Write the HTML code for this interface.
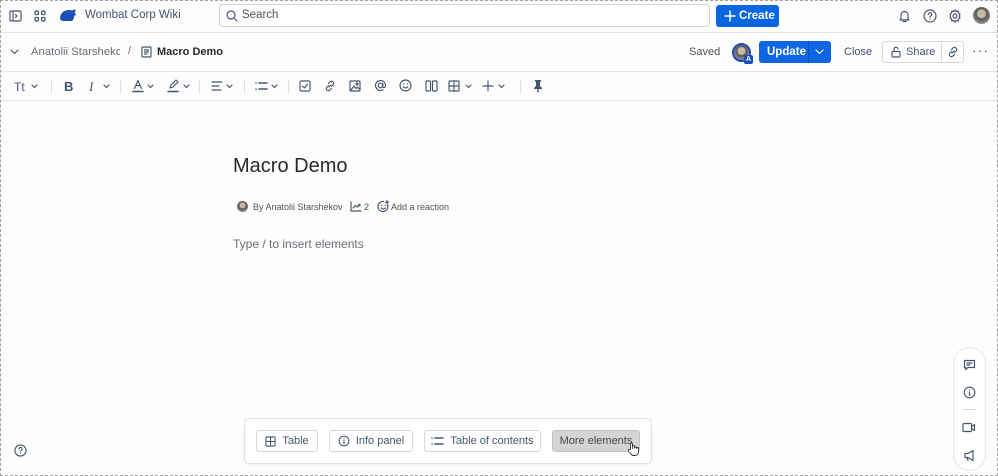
<!DOCTYPE html>
<html><head><meta charset="utf-8"><style>
*{box-sizing:border-box;margin:0;padding:0}
body{width:998px;height:476px;overflow:hidden;background:#fdfdfd;font-family:"Liberation Sans",sans-serif;color:#292a2e;position:relative}
.frame{position:absolute;inset:0;border:1px dashed #a0a0a0;pointer-events:none;z-index:10}
.a{position:absolute}
.hl{position:absolute;left:0;right:0;height:1px;background:#e3e4e6}
svg{fill:none;stroke:#44546f;stroke-width:1.15;stroke-linecap:round;stroke-linejoin:round}
svg.a{position:absolute}
.t{position:absolute;font-size:11px;white-space:nowrap}
.btn{position:absolute;border:1px solid #d5d7db;border-radius:3px;background:#fff;font-size:11px;color:#44546f;display:flex;align-items:center;justify-content:center;gap:6px;white-space:nowrap}
.sep{position:absolute;top:79px;width:1px;height:15px;background:#dcdfe4}
</style></head><body>
<div class="frame"></div>
<!-- top bar -->
<svg class="a" style="left:9px;top:10px" width="13" height="12" viewBox="0 0 13 12"><rect x="1" y="1" width="11" height="10" rx="1"/><path d="M4 1v10M6.5 4.5l1.5 1.5-1.5 1.5"/></svg>
<svg class="a" style="left:34px;top:10px" width="12" height="12" viewBox="0 0 12 12"><rect x="1" y="1" width="3.5" height="3.5" rx=".8"/><rect x="7.5" y="1" width="3.5" height="3.5" rx=".8"/><rect x="1" y="7.5" width="3.5" height="3.5" rx=".8"/><rect x="7.5" y="7.5" width="3.5" height="3.5" rx=".8"/></svg>
<svg class="a" style="left:59px;top:8px;stroke:none" width="18" height="14" viewBox="0 0 18 14"><path fill="#1d4fb8" d="M1 11C1 5 5 2 10 2c3 0 5 1 6 3l1 2-2 1c0 3-1 5-3 5H3z"/><circle cx="15" cy="3" r="1.5" fill="#1d4fb8"/></svg>
<div class="t" style="left:85px;top:9px;font-size:11.5px;color:#44546f">Wombat Corp Wiki</div>
<div class="a" style="left:219px;top:4px;width:491px;height:23px;border:1px solid #d0d3d8;border-radius:4px;background:#fff"></div>
<svg class="a" style="left:226px;top:10px" width="12" height="12" viewBox="0 0 12 12"><circle cx="5" cy="5" r="4"/><path d="M8 8l3 3"/></svg>
<div class="t" style="left:242px;top:9px;font-size:11.5px;color:#505258">Search</div>
<div class="a" style="left:716px;top:5px;width:63px;height:22px;background:#0c66e4;border-radius:3px;color:#fff;font-size:11.5px;font-weight:bold;line-height:22px;padding-left:23px">Create</div>
<svg class="a" style="left:724px;top:10px;stroke:#fff;stroke-width:1.5" width="12" height="12" viewBox="0 0 12 12"><path d="M6 1v10M1 6h10"/></svg>
<svg class="a" style="left:898px;top:9px" width="13" height="14" viewBox="0 0 13 14"><path d="M3 10V6a3.5 3.5 0 017 0v4l1 1H2zM5 12.5h3"/></svg>
<svg class="a" style="left:923px;top:9px" width="14" height="14" viewBox="0 0 14 14"><circle cx="7" cy="7" r="6"/><path d="M5.3 5.5a1.7 1.7 0 113 1c-.8.5-1.3.8-1.3 1.7M7 10v.1"/></svg>
<svg class="a" style="left:948px;top:9px" width="14" height="14" viewBox="0 0 14 14"><circle cx="7" cy="7" r="2"/><path d="M7 1l1.2 1.5 1.9-.4.4 1.9L12 5.2 11.3 7l.7 1.8-1.5 1.2-.4 1.9-1.9-.4L7 13l-1.2-1.5-1.9.4-.4-1.9L2 8.8 2.7 7 2 5.2 3.5 4l.4-1.9 1.9.4z"/></svg>
<div class="a" style="left:973px;top:7px;width:17px;height:17px;border-radius:50%;background:radial-gradient(circle at 50% 40%,#c9b8a8 30%,#555 38%,#aaa 90%)"></div>
<div class="hl" style="top:32px"></div>
<!-- second bar -->
<svg class="a" style="left:10px;top:49px" width="9" height="6" viewBox="0 0 9 6"><path d="M1 1l3.5 3.5L8 1"/></svg>
<div class="t" style="left:31px;top:46px;color:#6b6e76;font-size:11.3px;width:89px;overflow:hidden">Anatolii Starshekov</div>
<div class="t" style="left:128px;top:45px;color:#6b6e76">/</div>
<svg class="a" style="left:141px;top:46px" width="11" height="12" viewBox="0 0 11 12"><rect x="1" y="1" width="9" height="10" rx="1"/><path d="M3.5 4h4M3.5 6h4M3.5 8h2.5"/></svg>
<div class="t" style="left:157px;top:46px;font-weight:bold;color:#292a2e">Macro Demo</div>
<div class="t" style="left:689px;top:46px;color:#505258">Saved</div>
<div class="a" style="left:732px;top:43px;width:19px;height:19px;border-radius:50%;border:2px solid #1d4fb8;background:radial-gradient(circle at 50% 40%,#c9b8a8 30%,#555 38%,#aaa 90%)"></div>
<div class="a" style="left:744px;top:55px;width:9px;height:9px;background:#1d4fb8;color:#fff;font-size:7px;font-weight:bold;text-align:center;line-height:9px;border-radius:2px">A</div>
<div class="a" style="left:759px;top:41px;width:72px;height:22px;background:#0c66e4;border-radius:3px"></div>
<div class="t" style="left:767px;top:46px;color:#fff;font-weight:bold;font-size:11.5px">Update</div>
<div class="a" style="left:808px;top:41px;width:1px;height:22px;background:#0a4fb0"></div>
<svg class="a" style="left:815px;top:49px;stroke:#fff" width="9" height="6" viewBox="0 0 9 6"><path d="M1 1l3.5 3.5L8 1"/></svg>
<div class="t" style="left:844px;top:46px;color:#44546f">Close</div>
<div class="a" style="left:882px;top:41px;width:82px;height:22px;border:1px solid #d5d7db;border-radius:3px;background:#fff"></div>
<div class="a" style="left:941px;top:41px;width:1px;height:22px;background:#d5d7db"></div>
<svg class="a" style="left:891px;top:46px" width="10" height="12" viewBox="0 0 10 12"><rect x="1" y="5.5" width="8" height="5.5" rx="1"/><path d="M3 5.5V3.5a2 2 0 014-.5"/></svg>
<div class="t" style="left:906px;top:46px;color:#44546f">Share</div>
<svg class="a" style="left:947px;top:46px" width="12" height="12" viewBox="0 0 12 12"><path d="M5 7l2-2M4.5 5.5L3 7a2 2 0 003 3l1.5-1.5M7.5 6.5L9 5a2 2 0 00-3-3L4.5 3.5"/></svg>
<div class="t" style="left:972px;top:42px;font-size:14px;color:#44546f;letter-spacing:1px">···</div>
<div class="hl" style="top:71px"></div>
<!-- toolbar -->
<div class="t" style="left:14px;top:80px;font-size:12px;color:#44546f">Tt</div>
<svg class="a" style="left:31px;top:84px" width="7" height="5" viewBox="0 0 7 5"><path d="M1 1l2.5 2.5L6 1"/></svg>
<div class="sep" style="left:51px"></div>
<div class="t" style="left:64px;top:79px;font-size:13px;font-weight:bold;color:#44546f">B</div>
<div class="t" style="left:89px;top:79px;font-size:13px;font-style:italic;font-family:'Liberation Serif',serif;color:#44546f">I</div>
<svg class="a" style="left:103px;top:84px" width="7" height="5" viewBox="0 0 7 5"><path d="M1 1l2.5 2.5L6 1"/></svg>
<div class="sep" style="left:120px"></div>
<svg class="a" style="left:132px;top:79px" width="12" height="14" viewBox="0 0 12 14"><path d="M2.5 9.5L6 1.5l3.5 8M4 6.5h4"/><path d="M1 12.5h10" stroke-width="1.6"/></svg>
<svg class="a" style="left:147px;top:84px" width="7" height="5" viewBox="0 0 7 5"><path d="M1 1l2.5 2.5L6 1"/></svg>
<svg class="a" style="left:167px;top:79px" width="12" height="14" viewBox="0 0 12 14"><path d="M3 9l1-3 5-5 2 2-5 5z"/><path d="M1 12.5h10" stroke-width="1.6"/></svg>
<svg class="a" style="left:183px;top:84px" width="7" height="5" viewBox="0 0 7 5"><path d="M1 1l2.5 2.5L6 1"/></svg>
<div class="sep" style="left:199px"></div>
<svg class="a" style="left:211px;top:81px" width="12" height="10" viewBox="0 0 12 10"><path d="M1 1h10M1 5h7M1 9h9"/></svg>
<svg class="a" style="left:226px;top:84px" width="7" height="5" viewBox="0 0 7 5"><path d="M1 1l2.5 2.5L6 1"/></svg>
<div class="sep" style="left:244px"></div>
<svg class="a" style="left:255px;top:81px" width="13" height="10" viewBox="0 0 13 10"><path d="M1 2h.1M1 8h.1M4 2h8M4 8h8" stroke-width="1.5"/></svg>
<svg class="a" style="left:271px;top:84px" width="7" height="5" viewBox="0 0 7 5"><path d="M1 1l2.5 2.5L6 1"/></svg>
<div class="sep" style="left:288px"></div>
<svg class="a" style="left:299px;top:80px" width="12" height="12" viewBox="0 0 12 12"><rect x="1" y="1" width="10" height="10" rx="1.5"/><path d="M3.5 6l2 2 3-4"/></svg>
<svg class="a" style="left:324px;top:80px" width="12" height="12" viewBox="0 0 12 12"><path d="M5 7l2-2M4.5 5.5L3 7a2 2 0 003 3l1.5-1.5M7.5 6.5L9 5a2 2 0 00-3-3L4.5 3.5"/></svg>
<svg class="a" style="left:349px;top:80px" width="12" height="12" viewBox="0 0 12 12"><rect x="1" y="1" width="10" height="10" rx="1"/><path d="M2 10l3-4 2 2.5 1.5-1.5L10 9"/><circle cx="8" cy="4" r="1"/></svg>
<svg class="a" style="left:374px;top:79px" width="13" height="13" viewBox="0 0 13 13"><circle cx="6.5" cy="6.5" r="2.3"/><path d="M8.8 4.5v3c0 1.5 2.7 1.5 2.7-1A5 5 0 109 10.8"/></svg>
<svg class="a" style="left:399px;top:79px" width="13" height="13" viewBox="0 0 13 13"><circle cx="6.5" cy="6.5" r="5.5"/><path d="M4.3 7.8a2.8 2.8 0 004.4 0M4.6 5h.1M8.4 5h.1"/></svg>
<svg class="a" style="left:425px;top:80px" width="13" height="12" viewBox="0 0 13 12"><rect x="1" y="1" width="4.5" height="10" rx="1"/><rect x="7.5" y="1" width="4.5" height="10" rx="1"/></svg>
<svg class="a" style="left:448px;top:80px" width="12" height="12" viewBox="0 0 12 12"><rect x="1" y="1" width="10" height="10" rx="1"/><path d="M6 1v10M1 6h10"/></svg>
<svg class="a" style="left:465px;top:84px" width="7" height="5" viewBox="0 0 7 5"><path d="M1 1l2.5 2.5L6 1"/></svg>
<svg class="a" style="left:482px;top:80px" width="12" height="12" viewBox="0 0 12 12"><path d="M6 1v10M1 6h10"/></svg>
<svg class="a" style="left:498px;top:84px" width="7" height="5" viewBox="0 0 7 5"><path d="M1 1l2.5 2.5L6 1"/></svg>
<div class="sep" style="left:520px"></div>
<svg class="a" style="left:532px;top:79px;stroke:none" width="12" height="14" viewBox="0 0 12 14"><path fill="#44546f" d="M3 1h6v1.5L8 3v4l2 2v1H6.7v3.5h-1.4V10H2V9l2-2V3L3 2.5z"/></svg>
<div class="hl" style="top:100px"></div>
<!-- content -->
<div class="t" style="left:233px;top:155px;font-size:20px;color:#292a2e">Macro Demo</div>
<div class="a" style="left:237px;top:201px;width:11px;height:11px;border-radius:50%;background:radial-gradient(circle at 50% 40%,#c9b8a8 30%,#555 40%,#aaa 90%)"></div>
<div class="t" style="left:253px;top:202px;font-size:9px;color:#505258">By Anatolii Starshekov</div>
<svg class="a" style="left:350px;top:201px" width="12" height="11" viewBox="0 0 12 11"><path d="M1 1v9h10M3 7l2.5-2.5 2 1.5L10 3.5M8.5 3.5H10V5"/></svg>
<div class="t" style="left:364px;top:202px;font-size:9px;color:#505258">2</div>
<svg class="a" style="left:377px;top:200px" width="13" height="13" viewBox="0 0 13 13"><path d="M10.5 4.5A5 5 0 116.5 1.5"/><path d="M4.3 8a2.5 2.5 0 004 0M4.6 5.5h.1M8 5.5h.1M10 .5v3.5M8.3 2.2h3.5"/></svg>
<div class="t" style="left:391px;top:202px;font-size:9px;color:#505258">Add a reaction</div>
<div class="t" style="left:233px;top:237px;font-size:12px;color:#6b6e76">Type / to insert elements</div>
<!-- side panel -->
<div class="a" style="left:953px;top:347px;width:33px;height:124px;border:1px solid #e6e7ea;border-radius:17px;background:#fff"></div>
<svg class="a" style="left:963px;top:359px" width="13" height="12" viewBox="0 0 13 12"><path d="M1.5 1.5h10v7H5L2.5 10.5V8.5h-1z"/><path d="M4 4h5M4 6h3"/></svg>
<svg class="a" style="left:963px;top:386px" width="13" height="13" viewBox="0 0 13 13"><circle cx="6.5" cy="6.5" r="5.3"/><path d="M6.5 6v3.5M6.5 4v.1"/></svg>
<div class="a" style="left:963px;top:409px;width:13px;height:1px;background:#d5d7db"></div>
<svg class="a" style="left:962px;top:422px" width="14" height="11" viewBox="0 0 14 11"><rect x="1" y="1.5" width="8.5" height="8" rx="1"/><path d="M9.5 4.5l3-2v6l-3-2"/></svg>
<svg class="a" style="left:963px;top:449px" width="13" height="13" viewBox="0 0 13 13"><path d="M2 4.5h3l5-3v10l-5-3H2zM4 8.5l1 3"/></svg>
<!-- help -->
<svg class="a" style="left:14px;top:444px" width="13" height="13" viewBox="0 0 14 14"><circle cx="7" cy="7" r="6"/><path d="M5.3 5.5a1.7 1.7 0 113 1c-.8.5-1.3.8-1.3 1.7M7 10v.1"/></svg>
<!-- bottom bar -->
<div class="a" style="left:244px;top:418px;width:408px;height:46px;border:1px solid #dfe1e5;border-radius:5px;background:#fff;box-shadow:0 1px 3px rgba(0,0,0,.06)"></div>
<div class="btn" style="left:256px;top:430px;width:62px;height:22px"><svg width="11" height="11" viewBox="0 0 12 12"><rect x="1" y="1" width="10" height="10" rx="1"/><path d="M6 1v10M1 6h10"/></svg>Table</div>
<div class="btn" style="left:329px;top:430px;width:84px;height:22px"><svg width="12" height="12" viewBox="0 0 13 13"><circle cx="6.5" cy="6.5" r="5.3"/><path d="M6.5 6v3.5M6.5 4v.1"/></svg>Info panel</div>
<div class="btn" style="left:424px;top:430px;width:117px;height:22px"><svg width="13" height="10" viewBox="0 0 13 10"><path d="M1 2h.1M1 8h.1M4 2h8M4 8h8" stroke-width="1.4"/></svg>Table of contents</div>
<div class="btn" style="left:552px;top:430px;width:88px;height:22px;background:#d4d4d4;border-color:#c4c4c4;color:#44474e">More elements</div>
<svg class="a" style="left:627px;top:442px;fill:#fff;stroke:#333;stroke-width:.9" width="12" height="14" viewBox="0 0 12 14"><path d="M3.5 7V2a1 1 0 012 0v4.5V4.5a1 1 0 012 0V6a1 1 0 012 0v.5a1 1 0 012 0V10a3.5 3.5 0 01-3.5 3.5H6.5A3 3 0 014 12L1.5 9a1 1 0 011.5-1.3z"/></svg>
</body></html>
